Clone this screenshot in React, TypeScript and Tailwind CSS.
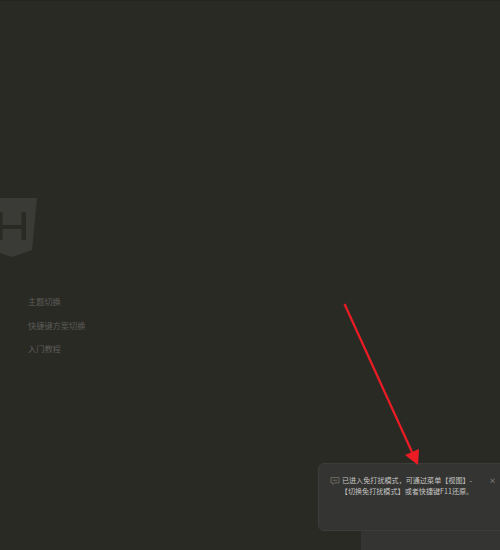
const cjk = "font-['Noto_Sans_CJK_SC','Noto_Sans',sans-serif]";

function Logo() {
  return (
    <svg width="50" height="60" viewBox="0 0 50 60" className="-ml-[13px] block">
      <path d="M0 0H50L45 52L25 59L4 52Z" fill="#3a3a37" />
      <path d="M11 14H15.5V27H34.5V14H39V42H34.5V31H15.5V42H11Z" fill="#2a2a25" />
    </svg>
  );
}

function Arrow() {
  return (
    <svg width="500" height="550" viewBox="0 0 500 550" className="absolute inset-0 pointer-events-none">
      <line x1="344.5" y1="304" x2="412" y2="452" stroke="#ed1c24" strokeWidth="2.2" />
      <path d="M405 455L419 449L418 465Z" fill="#ed1c24" />
    </svg>
  );
}

function Toast() {
  return (
    <div className="absolute left-[318px] top-[463px] w-[190px] h-[68px] rounded-[6px] bg-[#343432] border border-[#3c3c3a] flex items-start pt-[11px] pl-[11px]">
      <svg width="10" height="10" viewBox="0 0 16 16" fill="none" stroke="#77736a" strokeWidth="1.3" className="mt-[1px] shrink-0">
        <path d="M1.5 2.5H14.5V11H7L4.5 13.5V11H1.5Z" />
        <path d="M4.5 6.8H11.5" />
      </svg>
      <p className="w-[134px] text-[7.1px] leading-[11px] text-[#c4c4c2] text-center">
        已进入免打扰模式，可通过菜单【视图】-【切换免打扰模式】或者快捷键F11还原。
      </p>
      <span className="ml-[15px] text-[7px] leading-[11px] text-[#a0a09e]">×</span>
    </div>
  );
}

export default function App() {
  return (
    <div className={`relative w-[500px] h-[550px] overflow-hidden bg-[#2a2a25] ${cjk}`}>
      <div className="h-px bg-[#232321]" />
      <div className="pt-[197px] flex flex-col">
        <Logo />
        <ul className="pl-[28px] mt-[38px] flex flex-col gap-[12.5px] text-[8.2px] leading-[11px] text-[#5c5c58]">
          <li>主题切换</li>
          <li>快捷键方案切换</li>
          <li>入门教程</li>
        </ul>
      </div>
      <div className="absolute left-[361px] top-[531px] right-0 bottom-0 bg-[#343432]" />
      <Toast />
      <Arrow />
    </div>
  );
}
